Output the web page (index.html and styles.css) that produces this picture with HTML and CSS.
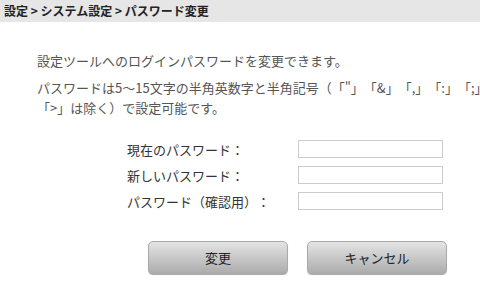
FILE: index.html
```html
<!DOCTYPE html>
<html lang="ja">

<head>
    <meta charset="UTF-8">
    <meta name="viewport" content="width=device-width, initial-scale=1.0">
    <title>パスワード変更</title>
    <link rel="stylesheet" href="styles.css">
</head>

<body>
    <div class="crumb">設定 &gt; システム設定 &gt; パスワード変更</div>
    <div class="content">
        <p class="desc">設定ツールへのログインパスワードを変更できます。</p>
        <p class="desc note">パスワードは5〜15文字の半角英数字と半角記号（「"」「&amp;」「,」「:」「;」「&lt;」<br>「&gt;」は除く）で設定可能です。</p>
        <div class="form">
            <div class="form-row">
                <label for="cur">現在のパスワード：</label>
                <input type="password" class="pw-input" id="cur">
            </div>
            <div class="form-row">
                <label for="new">新しいパスワード：</label>
                <input type="password" class="pw-input" id="new">
            </div>
            <div class="form-row">
                <label for="conf">パスワード（確認用）：</label>
                <input type="password" class="pw-input" id="conf">
            </div>
        </div>
        <div class="buttons">
            <a href="javascript:;" class="btn">変更</a>
            <a href="javascript:;" class="btn">キャンセル</a>
        </div>
    </div>
</body>

</html>
```

FILE: styles.css
```css
* {
    margin: 0;
    padding: 0;
}

body {
    width: 480px;
    overflow: hidden;
    background-color: #fff;
    font-family: "Noto Sans CJK JP", "Liberation Sans", sans-serif;
    text-spacing-trim: space-all;
    color: #555;
}

a {
    text-decoration: none;
    color: #222;
}

.crumb {
    height: 22px;
    line-height: 22px;
    padding-left: 4px;
    background-color: #e6e6e6;
    font-size: 12px;
    font-weight: bold;
    color: #222;
    white-space: nowrap;
}

.content {
    padding: 29px 0 0 37px;
}

.desc {
    font-size: 13px;
    line-height: 20px;
    white-space: nowrap;
}

.note {
    margin-top: 7px;
}

.form {
    margin-top: 22px;
    padding-left: 90px;
}

.form-row {
    display: flex;
    align-items: center;
    height: 18px;
    margin-bottom: 8px;
}

.form-row label {
    width: 171px;
    font-size: 13px;
    color: #333;
}

.pw-input {
    box-sizing: border-box;
    width: 145px;
    height: 18px;
    border: 1px solid #ccc;
    background-color: #fff;
    outline: none;
}

.buttons {
    display: flex;
    gap: 19px;
    margin-top: 31px;
    padding-left: 111px;
}

.btn {
    box-sizing: border-box;
    width: 140px;
    height: 34px;
    line-height: 32px;
    text-align: center;
    font-size: 13px;
    border: 1px solid #aaa;
    border-radius: 5px;
    background: linear-gradient(#e4e4e4, #ababab);
    box-shadow: 0 1px 1px rgba(0, 0, 0, .15);
}
```
